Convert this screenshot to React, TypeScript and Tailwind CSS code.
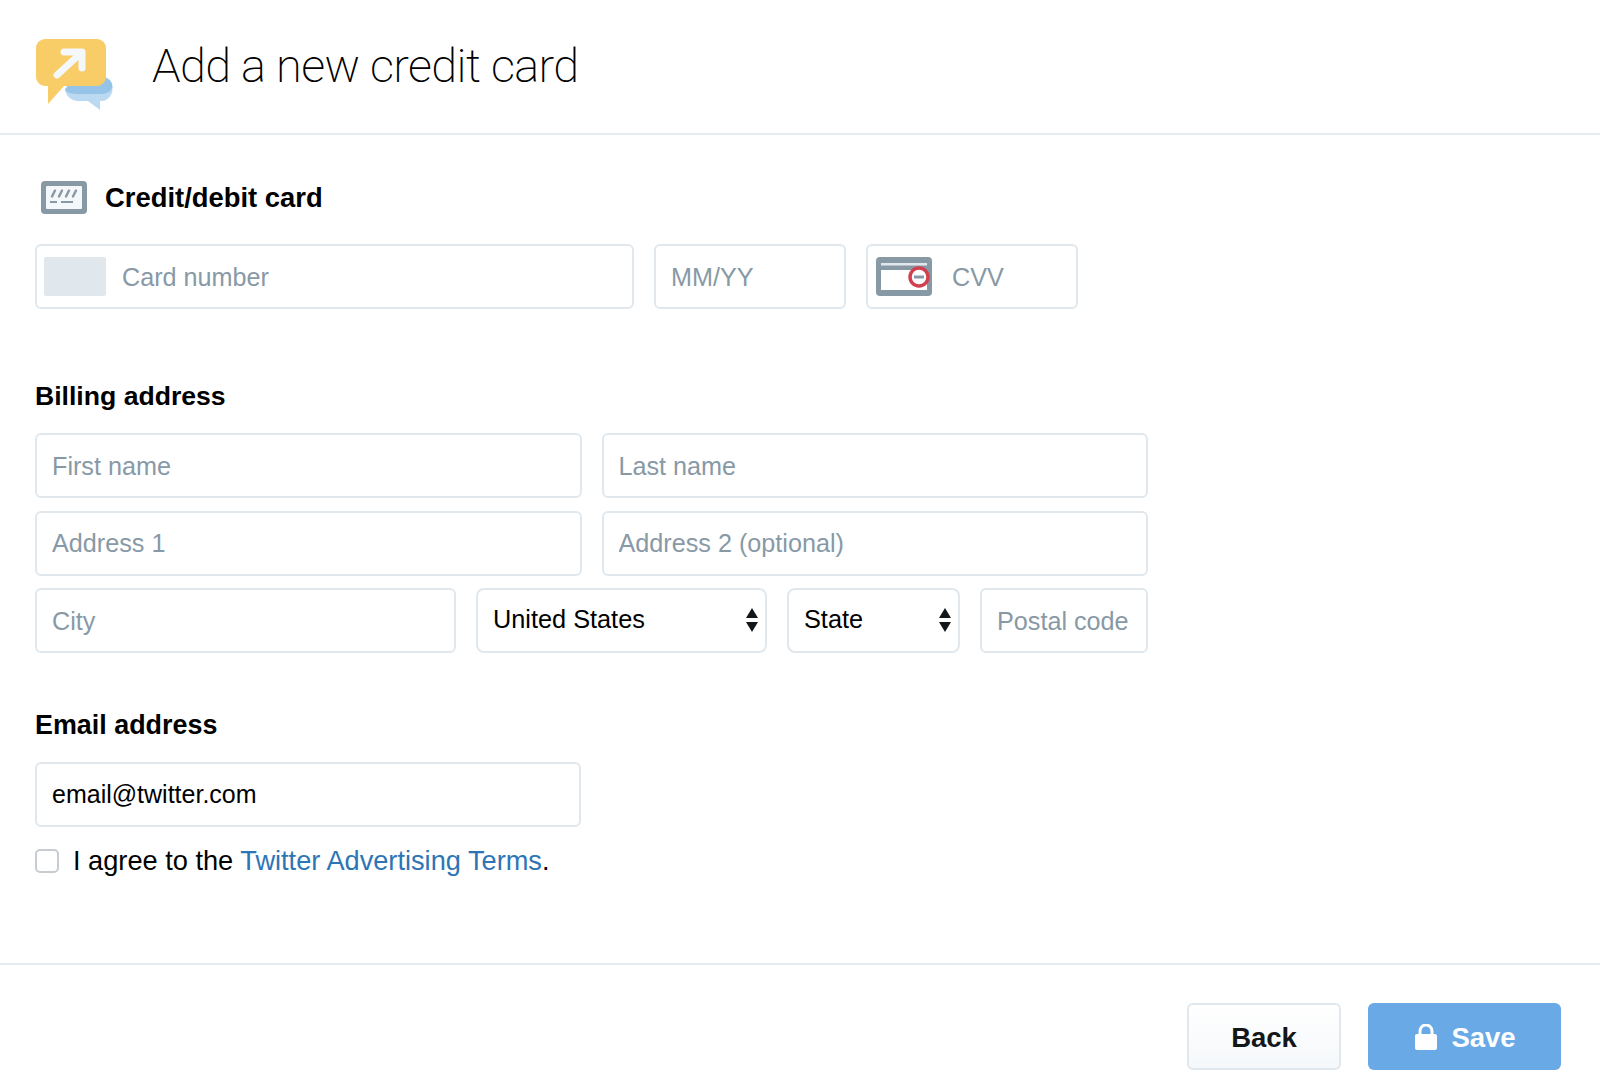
import { useState } from "react";

const inputClass =
  "h-[65px] rounded-[6px] border-2 border-[#e1e8ed] bg-white px-[15px] pt-[1px] text-[25.200px] text-black outline-none placeholder:text-[#8899a6]";

function Logo() {
  return (
    <svg width="77" height="72" viewBox="0 0 77 72" className="mt-[16px] shrink-0">
      {/* blue bubble at the back */}
      <path d="M38 38 H66 a10 12 0 0 1 10.500 12 a12 12 0 0 1 -11 12 H64 V71 L52 62 H42 a13 13 0 0 1 -13 -12 Z" fill="#bcd9f2" />
      <path d="M38 38 H66 a10 10 0 0 1 10.500 10 a11 9 0 0 1 -11 7 H42 a14 6 0 0 1 -13 -4 Z" fill="#96c3e8" />
      {/* yellow bubble */}
      <path d="M9 0 H61 a9 9 0 0 1 9 9 V38 a9 9 0 0 1 -9 9 H28 L12 65 V47 H9 a9 9 0 0 1 -9 -9 V9 a9 9 0 0 1 9 -9 Z" fill="#f8cc66" />
      <path d="M28 13 H46 V29 M44 15 L21 36" fill="none" stroke="#f5f8fa" strokeWidth="7" strokeLinecap="round" strokeLinejoin="round" />
    </svg>
  );
}

function CardIcon() {
  return (
    <svg width="46" height="33" viewBox="0 0 46 33" className="shrink-0">
      <rect x="0" y="0" width="46" height="33" rx="4" fill="#8899a6" />
      <rect x="5" y="5" width="36" height="23" rx="1" fill="#f5f8fa" />
      <path d="M14 9.500 L11 15.500 M21 9.500 L18 15.500 M28 9.500 L25 15.500 M35 9.500 L32 15.500" stroke="#8899a6" strokeWidth="2.400" strokeLinecap="round" />
      <path d="M9 21 H16 M20 21 H32" stroke="#8899a6" strokeWidth="2.200" />
    </svg>
  );
}

function CvvIcon() {
  return (
    <svg width="58" height="40" viewBox="0 0 58 40" className="shrink-0">
      <rect x="0" y="0" width="56" height="39" rx="4" fill="#8899a6" />
      <rect x="5" y="6" width="46" height="2.500" fill="#e1e8ed" />
      <rect x="5" y="13" width="46" height="20" fill="#ffffff" />
      <circle cx="43" cy="20" r="9" fill="#ffffff" stroke="#d0404f" strokeWidth="3.500" />
      <rect x="38" y="18.500" width="10" height="3" fill="#8899a6" />
    </svg>
  );
}

function SelectBox({ value, className }: { value: string; className: string }) {
  return (
    <div className={"relative " + className}>
      <select
        defaultValue={value}
        className="h-[65px] w-full appearance-none rounded-[8px] border-2 border-[#e1e8ed] bg-white pb-[1px] pl-[15px] pr-[36px] text-[25.300px] text-black outline-none"
      >
        <option>{value}</option>
      </select>
      <svg width="12" height="24" viewBox="0 0 12 24" className="pointer-events-none absolute right-[9px] top-[20px]">
        <path d="M6 0 L12 10 H0 Z M0 14 H12 L6 24 Z" fill="#14171a" />
      </svg>
    </div>
  );
}

export default function App() {
  const [agree, setAgree] = useState(false);

  return (
    <div className="flex h-[1090px] flex-col bg-white font-['Liberation_Sans',Arial,sans-serif] text-black">
      <header className="flex h-[135px] items-center border-b-2 border-[#e6ecf0] pl-[36px]">
        <Logo />
        <h1 className="ml-[39px] font-['Roboto',sans-serif] text-[47px] font-extralight tracking-[-0.65px]">
          Add a new credit card
        </h1>
      </header>

      <main className="flex-1 pl-[35px]">
        <div className="mt-[45px] flex h-[34px] items-center pl-[6px]">
          <CardIcon />
          <h2 className="ml-[18px] pt-[1px] text-[27.400px] font-bold">Credit/debit card</h2>
        </div>
        <div className="mt-[30px] flex w-[1043px] gap-[20px]">
          <div className="relative w-[599px]">
            <input placeholder="Card number" className={inputClass + " w-full pl-[85px]"} />
            <span className="absolute left-[9px] top-[13px] h-[39px] w-[62px] rounded-[2px] bg-[#e1e8ed]" />
          </div>
          <input placeholder="MM/YY" className={inputClass + " w-[192px]"} />
          <div className="relative w-[212px]">
            <input placeholder="CVV" className={inputClass + " w-full pl-[84px]"} />
            <span className="absolute left-[10px] top-[13px]">
              <CvvIcon />
            </span>
          </div>
        </div>

        <h2 className="mt-[70px] text-[26.600px] font-bold leading-[34px]">Billing address</h2>
        <div className="mt-[20px] flex w-[1113px] flex-col gap-[12.500px]">
          <div className="grid grid-cols-2 gap-[20px]">
            <input placeholder="First name" className={inputClass + " w-full"} />
            <input placeholder="Last name" className={inputClass + " w-full"} />
          </div>
          <div className="grid grid-cols-2 gap-[20px]">
            <input placeholder="Address 1" className={inputClass + " w-full"} />
            <input placeholder="Address 2 (optional)" className={inputClass + " w-full"} />
          </div>
          <div className="flex gap-[20px]">
            <input placeholder="City" className={inputClass + " w-[421px]"} />
            <SelectBox value="United States" className="w-[291px] shrink-0" />
            <SelectBox value="State" className="w-[173px] shrink-0" />
            <input placeholder="Postal code" className={inputClass + " w-[168px]"} />
          </div>
        </div>

        <h2 className="mt-[55px] text-[26.900px] font-bold leading-[34px]">Email address</h2>
        <div className="mt-[19.500px] w-[546px]">
          <input defaultValue="email@twitter.com" className={inputClass + " w-full text-[25px]!"} />
        </div>
        <label className="mt-[17px] flex items-center text-[27.200px] leading-[34px]">
          <input
            type="checkbox"
            checked={agree}
            onChange={(e) => setAgree(e.target.checked)}
            className="h-[24px] w-[24px] appearance-none rounded-[5px] border-2 border-[#c6ccd1] bg-white"
          />
          <span className="ml-[14px]">
            I agree to the <a className="text-[#2e75b5]">Twitter Advertising Terms</a>.
          </span>
        </label>
      </main>

      <footer className="flex h-[127px] items-start justify-end gap-[27px] border-t-2 border-[#e6ecf0] pr-[39px] pt-[38px]">
        <button className="h-[67px] w-[154px] rounded-[6px] border-2 border-[#e1e8ed] bg-gradient-to-b from-white to-[#f5f8fa] pt-[2px] text-[27.500px] font-bold text-[#14171a]">
          Back
        </button>
        <button className="flex h-[67px] w-[193px] items-center justify-center gap-[14px] rounded-[6px] bg-[#69a9e6] pl-[2px] text-[27.500px] font-bold text-white">
          <svg width="22" height="26" viewBox="0 0 22 26">
            <path d="M5 11 V7 a6 6 0 0 1 12 0 V11" fill="none" stroke="#ffffff" strokeWidth="3" />
            <rect x="0" y="10" width="22" height="16" rx="2" fill="#ffffff" />
          </svg>
          <span className="pt-[2px]">Save</span>
        </button>
      </footer>
    </div>
  );
}
